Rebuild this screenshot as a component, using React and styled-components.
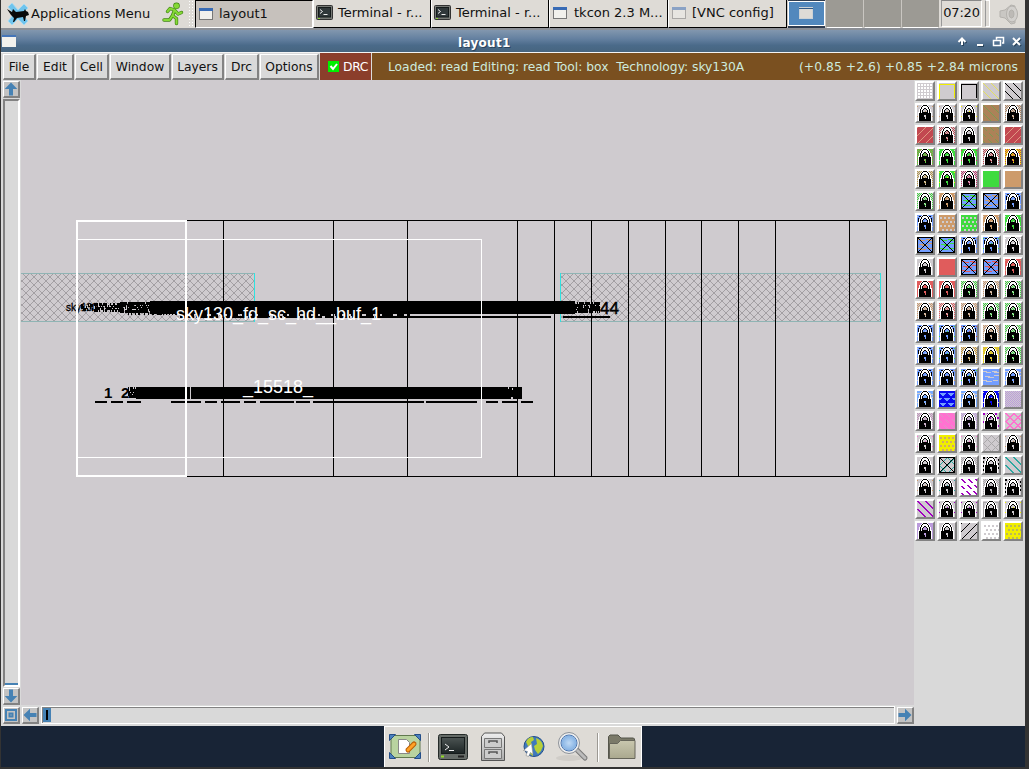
import React from 'react';
import styled, { createGlobalStyle } from 'styled-components';

const Global = createGlobalStyle`
  * { box-sizing: border-box; }
  body { margin: 0; background: #333; overflow: hidden; }
  svg { display: block; }
`;

const Desktop = styled.div`
  width: 1029px;
  height: 769px;
  padding: 0 4px 2px 1px;
  background: #333;
  font: 13px/16px 'DejaVu Sans', sans-serif;
  color: #111;
  display: flex;
  flex-direction: column;
  white-space: pre;
`;

/* Top panel */
const Panel = styled.header`
  display: flex;
  height: 28px;
  flex: none;
  background: #dedbd6;
`;
const AppMenu = styled.div`
  display: flex;
  align-items: center;
  width: 161px;
  padding-left: 5px;
  gap: 1px;
`;
const Runner = styled.div`
  width: 26px;
  padding-top: 2px;
`;
const Handle = styled.div`
  width: 7px;
  background: radial-gradient(circle, #fff 0.8px, transparent 1px) 0 0 / 3px 3px;
`;
const Task = styled.div`
  display: flex;
  align-items: center;
  height: 28px;
  width: ${p => p.$w}px;
  padding: 0 0 ${p => (p.$active ? 1 : 1)}px 2px;
  gap: ${p => p.$gap || 5}px;
  background: ${p => (p.$active ? '#c6c1bc' : '#dedbd6')};
  border: solid;
  border-width: ${p => (p.$active ? '1px' : '0 1px 1px 1px')};
  border-color: ${p => (p.$active ? '#000 #fff #fff #000' : '#fff #000 #000 #fff')};
  overflow: hidden;
`;
const Pager = styled.div`
  display: grid;
  grid-template-columns: repeat(4, 37px);
  column-gap: 1px;
  height: 28px;
  padding-left: 1px;
  background: #c9c6c1;
`;
const Workspace = styled.div`
  background: ${p => (p.$on ? '#5288bd' : '#9c9a94')};
  border: 1px solid ${p => (p.$on ? '#fff' : '#9c9a94')};
  border-bottom-color: #fff;
  margin: ${p => (p.$on ? '1px 0 2px' : '0')};
  box-shadow: ${p => (p.$on ? '0 -1px #2f3c50, 0 2px #2f3c50' : 'none')};
  padding: 5px 0 0 10px;
`;
const Clock = styled.div`
  width: 41px;
  height: 27px;
  margin-left: 2px;
  border: 1px solid #fff;
  border-top-color: #888;
  border-left-color: #999;
  text-align: center;
  line-height: 24px;
  letter-spacing: -0.2px;
`;
const TrayGrip = styled.div`
  width: 5px;
  height: 27px;
  margin-left: 3px;
  border: 1px solid #fff;
  border-left-color: #999;
`;
const Tray = styled.div`
  flex: 1;
  padding: 2px 0 0 7px;
  opacity: 0.8;
`;

/* Window */
const Window = styled.main`
  height: 698px;
  flex: none;
  border-top: 2px solid #8b8f96;
  display: flex;
  flex-direction: column;
  background: #d9d9d9;
`;
const TitleBar = styled.div`
  display: flex;
  height: 23px;
  flex: none;
  border-bottom: 1px solid #f4f4f4;
  background: linear-gradient(#8297ae 0, #6480a0 40%, #4a6a89 70%, #47657f 100%);
  color: #fff;
  font-weight: bold;
  font-size: 12px;
  line-height: 26px;
  text-shadow: 1px 1px #2b435c;
`;
const TitleText = styled.div`
  width: 944px;
  padding-left: 446px;
  margin-left: -4px;
  letter-spacing: 0.3px;
`;
const MenuRow = styled.nav`
  display: flex;
  height: 27px;
  flex: none;
  padding: 1px 0 0 2px;
  gap: 1px;
  background: #d9d9d9;
  font-size: 12.3px;
`;
const MenuButton = styled.div`
  width: ${p => p.$w}px;
  height: 26px;
  border: solid;
  border-width: 1px 2px 2px 1px;
  border-color: #fff #828282 #828282 #fff;
  text-align: center;
  line-height: 24px;
`;
const DrcToggle = styled.div`
  display: flex;
  align-items: center;
  gap: 4px;
  width: 52px;
  margin-top: -1px;
  padding: 0 0 0 8px;
  background: #8b3e2b;
  border-right: 1px solid #ddd;
  color: #fff;
  letter-spacing: -0.3px;
`;
const Status = styled.div`
  display: flex;
  flex: 1;
  justify-content: space-between;
  margin: -1px 0 0 -1px;
  padding: 0 7px 0 16px;
  background: #7a5020;
  color: #cdeade;
  line-height: 28px;
`;
const StatusText = styled.span`
  letter-spacing: ${p => p.$ls}px;
`;
const Body = styled.div`
  display: flex;
  flex: 1;
  min-height: 0;
`;
const Work = styled.div`
  width: 913px;
  display: grid;
  grid-template: 625px 20px / 20px 893px;
`;
const VScroll = styled.div`
  display: flex;
  flex-direction: column;
  align-items: center;
  gap: 1px;
  padding: 1px 1px 0 2px;
`;
const ArrowButton = styled.div`
  width: 17px;
  height: 17px;
  flex: none;
  background: #c3c3c3;
  border: solid;
  border-width: 1px 2px 2px 1px;
  border-color: #fff #828282 #828282 #fff;
`;
const VTrough = styled.div`
  width: 17px;
  height: 588px;
  flex: none;
  border: 2px solid #fff;
  border-top-color: #828282;
  border-left-color: #828282;
  display: flex;
  align-items: flex-end;
  &::after { content: ''; width: 100%; height: 2px; background: #4682b4; }
`;
const HScroll = styled.div`
  grid-column: 1 / 3;
  display: flex;
  align-items: center;
  gap: 2px;
  padding-left: 2px;
`;
const HTrough = styled.div`
  width: 854px;
  height: 18px;
  border: 1px solid #fff;
  box-shadow: inset 1px 1px #828282;
  padding: 1px;
`;
const Thumb = styled.div`
  width: 8px;
  height: 14px;
  background: #4682b4;
  padding: 2px 3px;
  &::after { content: ''; display: block; width: 2px; height: 10px; background: #000; }
`;
const Palette = styled.aside`
  display: grid;
  grid-template-columns: repeat(5, 20px);
  grid-auto-rows: 20px;
  align-content: start;
  gap: 2px;
  padding: 1px;
`;
const Swatch = styled.div`
  border: 2px solid;
  border-color: #fff #828282 #828282 #fff;
  background: #cfcbcf;
`;

/* Dock */
const Ground = styled.footer`
  flex: 1;
  display: flex;
  justify-content: center;
  background: #182436;
`;
const Dock = styled.div`
  display: flex;
  width: 258px;
  height: 41px;
  border: 1px solid #fff;
  border-bottom: 0;
  background: #dedbd6;
`;

const LOCK = [
  '.....WKKKKW.....',
  '....WKWWWWKW....',
  '...WKWWWWWWKW...',
  '...WKWWKKWWKW...',
  '..WKWWK..KWWKW..',
  '..WKWK....KWKW..',
  '..WKWK....KWKW..',
  '.WWKWKKKKKKWKWW.',
  '.WKKKKKKKKKKKKW.',
  '.WKKKKKKKKKKKKW.',
  '.WKKKKK..KKKKKW.',
  '.WKKKKK..KKKKKW.',
  '.WKKKKKK.KKKKKW.',
  '.WKKKKKK.KKKKKW.',
  '.WKKKKKKKKKKKKW.',
  '.WKKKKKKKKKKKKW.',
];
const lockPath = ch =>
  LOCK.map((row, y) => [...row].map((c, x) => (c === ch ? `M${x} ${y}h1v1h-1z` : '')).join('')).join('');
const LOCK_W = lockPath('W');
const LOCK_K = lockPath('K');

const grid = (step, w, ox = 0, oy = 0, stagger = 0, rowStep = step) => {
  let d = '';
  for (let y = oy, r = 0; y < 16; y += rowStep, r++)
    for (let x = ox + (r % 2 ? stagger : 0); x < 16; x += step) d += `M${x} ${y}h${w}v${w}h-${w}z`;
  return d;
};
const diagonal = (step, dir, gap = 0) => {
  let d = '';
  for (let y = 0; y < 16; y++)
    for (let x = 0; x < 16; x++) {
      const v = dir > 0 ? x - y : x + y;
      if (((v % step) + step) % step === 0 && !(gap && y % gap >= gap - 2)) d += `M${x} ${y}h1v1h-1z`;
    }
  return d;
};
const P = {
  none: '',
  check: grid(2, 1) + grid(2, 1, 1, 1),
  dots: grid(3, 2, 1, 1),
  holes: grid(4, 2, 1, 2, 2, 4),
  diag: diagonal(8, 1),
  slash: diagonal(8, -1),
  dash: diagonal(7, 1, 6),
  sparse: grid(5, 1, 0, 1, 3),
  cross: diagonal(8, 1) + diagonal(8, -1),
  blocks: grid(4, 2, 0, 0, 2),
  frame: 'M0 1h16v14h-1v-13h-14v14h-1z',
  dotframe: 'M0 0h2v2h-2zM4 0h2v1h-2zM8 0h2v1h-2zM12 0h2v1h-2zM0 4h1v2h-1zM0 8h1v2h-1zM0 12h1v2h-1zM15 2h1v2h-1zM15 6h1v2h-1zM15 10h1v2h-1zM2 15h2v1h-2zM6 15h2v1h-2zM10 15h2v1h-2z',
  waves: 'M0 2h4v1h4v1h-5v-1h-3zM9 2h5v1h2v1h-5v-1h-2zM2 7h5v1h4v1h-6v-1h-3zM11 6h5v1h-5zM0 11h4v1h5v1h-6v-1h-3zM10 11h5v1h-5z',
  zig: 'M1 2h6v1h-1v1h-1v1h-2v-1h-1v-1h-1zM9 2h6v1h-1v1h-1v1h-2v-1h-1v-1h-1zM5 7h6v1h-1v1h-1v1h-2v-1h-1v-1h-1zM0 7h3v1h-1v1h-2zM13 7h3v2h-2v-1h-1zM1 12h6v1h-1v1h-1v1h-2v-1h-1v-1h-1zM9 12h6v1h-1v1h-1v1h-2v-1h-1v-1h-1z',
};

const G = '#3edb3e', T = '#cd9b6b', R = '#c24850', C = '#e05c5c', B = '#739eff', Y = '#f0ee00', K = '#000', N = '#cfcbcf',
  W = '#fff', BR = '#ac8258', V = '#a000c0', PK = '#ff72d0', LI = '#bb9bdc', BL = '#0808f0', TE = '#2da8a0', GY = '#aaa8aa';

/* [background, pattern, pattern colour, locked, extra] */
const ROWS = [
  [[N, 'dots', W], [N, 'frame', Y], [N, 'frame', K], [N, 'diag', '#e4e060'], [N, 'diag', K]],
  [[N, 'sparse', T, 1], [N, 'sparse', T, 1], [N, 'sparse', Y, 1], [BR, 'diag', '#7c9a52'], [N, 'check', BR, 1]],
  [[R, 'slash', '#e09a83'], [N, 'check', R, 1], [N, 'none', K, 1], [BR, 'dash', '#7c9a52'], [R, 'slash', '#e09a83']],
  [[G, 'check', BR, 1], [G, 'sparse', N, 1], [G, 'sparse', R, 1], [N, 'check', R, 1], [Y, 'check', R, 1]],
  [[N, 'check', '#b79847', 1], [G, 'sparse', Y, 1], [N, 'check', '#bd356d', 1], [G, 'none', K], [T, 'none', K]],
  [[N, 'check', G, 1], [T, 'sparse', N, 1], [B, 'waves', G, 0, 'x'], [B, 'waves', T, 0, 'x'], [B, 'sparse', N, 1, 'f']],
  [[B, 'sparse', N, 1, 'f'], [T, 'holes', N], [G, 'holes', N], [T, 'sparse', N, 1], [G, 'sparse', N, 1]],
  [[B, 'waves', T, 0, 'x'], [B, 'waves', G, 0, 'x'], [B, 'sparse', T, 1, 'f'], [B, 'sparse', G, 1, 'f'], [N, 'sparse', W, 1]],
  [[N, 'none', K, 1], [C, 'none', K], [B, 'waves', C, 0, 'x'], [B, 'waves', C, 0, 'x'], [C, 'sparse', T, 1]],
  [[C, 'none', K, 1], [C, 'none', K, 1], [N, 'check', G, 1], [N, 'check', T, 1], [N, 'check', G, 1]],
  [[N, 'check', T, 1], [N, 'check', C, 1], [N, 'check', T, 1], [N, 'check', G, 1], [N, 'check', G, 1]],
  [[B, 'sparse', N, 1, 'f'], [B, 'sparse', G, 1, 'f'], [B, 'sparse', R, 1, 'f'], [N, 'check', T, 1], [N, 'check', G, 1]],
  [[B, 'sparse', N, 1, 'f'], [B, 'sparse', G, 1, 'f'], [N, 'check', '#c8962c', 1], [Y, 'check', T, 1], [N, 'check', G, 1]],
  [[B, 'sparse', N, 1, 'f'], [B, 'sparse', T, 1, 'f'], [B, 'sparse', G, 1, 'f'], [B, 'waves', N], [B, 'waves', N, 1]],
  [['#79acff', 'waves', N, 1], [BL, 'zig', B], ['#79acff', 'waves', N, 1], [BL, 'sparse', N, 1], [N, 'check', LI]],
  [[N, 'check', '#c093bc', 1], [PK, 'dash', '#d99bc4'], [N, 'check', LI, 1], [N, 'blocks', V, 1], [N, 'cross', PK, 0, 'o']],
  [[N, 'sparse', PK, 1], [Y, 'holes', '#cfa970'], [N, 'sparse', PK, 1], [N, 'cross', GY], [N, 'sparse', T, 1]],
  [[N, 'none', K, 1], [N, 'cross', TE, 0, 'x'], [N, 'check', GY, 1], [N, 'dotframe', K, 1], [N, 'diag', TE, 0, '2']],
  [[N, 'sparse', T, 1], [N, 'sparse', TE, 1], [W, 'dash', V, 0, '2'], [N, 'check', GY, 1], [N, 'dotframe', K, 1]],
  [[N, 'diag', V, 0, '2'], [N, 'sparse', V, 1], [N, 'sparse', V, 1], [N, 'frame', GY, 1], [N, 'sparse', Y, 1]],
  [[LI, 'none', K, 1], [N, 'none', K, 1], [N, 'slash', K], [W, 'holes', N], [Y, 'holes', '#bdb957']],
];

function Layer({ cell: [bg, kind, color, locked, extra] }) {
  return (
    <Swatch>
      <svg width="16" height="16" viewBox="0 0 16 16" shapeRendering="crispEdges">
        <rect width="16" height="16" fill={bg} />
        <path d={P[kind]} fill={color} />
        {extra === '2' && <path d={P[kind]} fill={color} transform="translate(1 0)" />}
        {extra === 'o' && <path d={P[kind]} fill={color} transform="translate(1 0)" />}
        {extra === 'x' && <path d="M.5 .5h15v15h-15zM0 0L16 16M16 0L0 16" fill="none" stroke="#000" />}
        {extra === 'f' && <path d="M1.5 16V2.500M14.500 16V2.500M2 1.500H14" fill="none" stroke="#000" />}
        {!!locked && <path d={LOCK_W} fill="#fff" />}
        {!!locked && <path d={LOCK_K} fill="#000" />}
      </svg>
    </Swatch>
  );
}

const Arrow = ({ turn = 0 }) => (
  <svg width="14" height="14" viewBox="0 0 14 14">
    <path d="M7 .5L13.300 7H9v6.500H5V7H.7z" fill="#4682b4" transform={`rotate(${turn} 7 7)`} />
  </svg>
);
const WinIcon = ({ dim }) => (
  <svg width="16" height="16" viewBox="0 0 16 16" opacity={dim ? 0.5 : 1}>
    <rect x="1.500" y="2.500" width="13" height="11" fill="#f1f0ec" stroke="#777" />
    <path d="M1 2h14v3H1z" fill="#386bb5" />
  </svg>
);
const TermIcon = () => (
  <svg width="17" height="16" viewBox="0 0 17 16">
    <rect x=".5" y=".5" width="16" height="14" rx="1" fill="#777a76" stroke="#333" />
    <rect x="2.500" y="2.500" width="12" height="9.500" fill="#30383a" stroke="#151b1b" />
    <path d="M4 4.500l2.500 2L4 8.500M7.500 9.500h4" fill="none" stroke="#eee" />
    <path d="M2 13.500h2" stroke="#91db36" />
  </svg>
);
const MouseLogo = () => (
  <svg width="24" height="24" viewBox="0 0 24 24">
    <path d="M2 5L6 1l6 7 6-6 4 4-6 6 6 7-4 4-6-6-6 6-4-4 6-7z" fill="#6fc4ed" stroke="#a9daf1" />
    <path d="M1 7l5 3 1-3 3 3 8-1 1-2 1 2 2 1 1 3-3 1-1 5h-1l-1-4-6 1-3 4H7l1-4-3-3z" fill="#080a0a" />
  </svg>
);
const RunIcon = () => (
  <svg width="24" height="24" viewBox="0 0 24 24" strokeLinecap="round" strokeLinejoin="round" fill="none">
    {[['#418514', 3.4], ['#85d936', 2]].map(([c, w]) => (
      <g key={c} stroke={c} strokeWidth={w}>
        <path d="M12.500 8.500l-2 5 4 3v5M10.500 13.500l-3 4.500H2M12.500 8L8 6.500 5.500 9.500M13 8.500l3 3.500 3.500-1.500" />
        <circle cx="14.500" cy="3.800" r="1.600" fill={c} />
      </g>
    ))}
  </svg>
);
const Speaker = () => (
  <svg width="24" height="24" viewBox="0 0 24 24" fill="#c5c3bf" stroke="#aaa8a4">
    <path d="M3 9l5-1 6-5 4 1v17l-4 1-6-6-5-1z" />
    <ellipse cx="15" cy="12" rx="5.500" ry="8" fill="#d0cecb" />
    <ellipse cx="14.500" cy="12" rx="2.500" ry="4" fill="#b5b3af" />
  </svg>
);
const WindowControls = () => (
  <svg width="68" height="22" viewBox="0 0 68 22" fill="none" stroke="#fff" strokeWidth="2">
    <g transform="translate(1 1)" stroke="#28435b">
      <path d="M6 15V9M2.500 12L6 8.500 9.500 12M21 15h6" /><path d="M57 8l7 7M64 8l-7 7" />
    </g>
    <path d="M6 15V9M2.500 12L6 8.500 9.500 12M21 15h6M57 8l7 7M64 8l-7 7" />
    <path d="M40.500 9.500V7.500h7v5.500H46M37.500 10.500h7v5h-7z" strokeWidth="1.500" />
  </svg>
);

const LINES = [223, 333, 407, 517, 554, 591, 628, 665, 701, 738, 775, 849];
const NAME = 'sky130_fd_sc_hd__buf_1';

/* Uneven marks, where many stacked labels merge into one mass */
const smear = (from, to, top, bottom, density, seed) => {
  let d = '', s = seed;
  const rnd = () => (s = (s * 16807) % 2147483647) / 2147483647;
  for (let i = 0; i < 20; i++) rnd();
  for (let x = from; x < to; x++)
    for (let y = top; y < bottom; y += 2) if (rnd() < density) d += `M${x} ${y}h1v3h-1z`;
  return d;
};
const SMEARS =
  smear(80, 96, 304, 310, 0.45, 11) + smear(94, 122, 303, 311, 0.65, 71) + smear(120, 150, 302, 312, 0.8, 29) +
  smear(124, 180, 312, 314, 0.35, 37) + smear(575, 600, 302, 311, 0.85, 91) + smear(128, 137, 387, 396, 0.8, 53);

function LayoutView() {
  return (
    <svg width="893" height="625" viewBox="21 80 893 625" fontFamily="Liberation Sans, sans-serif">
      <defs>
        <pattern id="hatch" width="8" height="8" x="22" y="273" patternUnits="userSpaceOnUse">
          <path d="M0 0l8 8M8 0L0 8" stroke="#a39fa3" />
        </pattern>
      </defs>
      <rect x="21" y="80" width="893" height="625" fill="#cfcbcf" />
      <g shapeRendering="crispEdges">
        <rect x="21" y="273" width="234" height="49" fill="url(#hatch)" />
        <rect x="560" y="273" width="321" height="49" fill="url(#hatch)" />
        <path d="M254.500 273V322M560.500 273V322M880.500 273V322" stroke="#2fe3e0" />
        <path d="M21 273.500H254M21 321.500H254M561 273.500H880M561 321.500H880" stroke="#8fb4b4" />
        <path d={`M187 220.500H886.500V476.500H187${LINES.map(x => `M${x}.500 220V476`).join('')}`} stroke="#000" fill="none" />
        <path d="M150 301H575V314H150z" />
        <path d={SMEARS} />
        <path d="M180 317H380" stroke="#000" strokeWidth="2" strokeDasharray="14 2 22 3 9 2" />
        <path d="M180 315H410" stroke="#000" strokeWidth="2" strokeDasharray="7 3 4 2 11 4" />
        <path d="M375 316h176v2H375zM563 316h47v2h-47z" />
        <path d="M136 387H522V399H136z" />
        <path d="M190 387h1v12h-1zM508 387h1v2h-1zM512 388h1v2h-1zM511 397h2v2h-2z" fill="#cfcbcf" />
        <path d="M95 401h12v2H95zM111 401h12v2h-12zM127 401h14v2h-14zM171 401h30v2h-30zM205 401h12v2h-12zM221 401h19v2h-19zM244 401h12v2h-12zM260 401h34v2h-34zM296 401h14v2h-14zM313 401h111v2H313zM426 401h51v2h-51zM486 401h12v2h-12zM502 401h15v2h-15zM521 401h12v2h-12z" />
      </g>
      <text x="66" y="311" fontSize="10" stroke="#000" strokeWidth=".3">sky130</text>
      <text x="600" y="314" fontSize="17" stroke="#000" strokeWidth=".5">44</text>
      <text x="104" y="398" fontSize="15" fontWeight="bold">1</text>
      <text x="121" y="398" fontSize="15" fontWeight="bold">2</text>
      <g fill="none" stroke="#fff" shapeRendering="crispEdges">
        <path d="M77 221H186V476H77z" strokeWidth="2" />
        <path d="M77 239.500H481.500V457.500H77" />
      </g>
      <g fill="#fff" fontSize="18">
        <text x="176" y="320" textLength="205">{NAME}</text>
        <text x="243" y="393" textLength="70">_15518_</text>
      </g>
    </svg>
  );
}

const DockIcons = () => (
  <svg width="256" height="40" viewBox="385 727 256 40">
    <defs>
      <linearGradient id="metal" x2="0" y2="1"><stop stopColor="#eee" /><stop offset="1" stopColor="#aaa" /></linearGradient>
      <linearGradient id="screen" x2="0" y2="1"><stop stopColor="#4c5453" /><stop offset="1" stopColor="#1c2424" /></linearGradient>
      <radialGradient id="glass"><stop stopColor="#bed9f5" /><stop offset="1" stopColor="#78a9df" /></radialGradient>
      <linearGradient id="folder" x2="0" y2="1"><stop stopColor="#c9c7af" /><stop offset="1" stopColor="#aaa88e" /></linearGradient>
    </defs>
    <rect x="391" y="735.500" width="29" height="22" rx="3" fill="#b9d3a0" stroke="#61794f" />
    <path d="M389.500 734.500h6l-6 6zM420.500 734.500h-6l6 6zM389.500 758.500v-6l6 6zM420.500 758.500v-6l-6 6z" fill="#4a80be" stroke="#244e88" />
    <path d="M398.500 739.500h8l3 3v11h-11z" fill="#fff" stroke="#888" />
    <path d="M408 750l6-6" stroke="#b85c00" strokeWidth="5" strokeLinecap="round" />
    <path d="M408 750l6-6" stroke="#ffa226" strokeWidth="3" strokeLinecap="round" />
    <path d="M428.500 733v29M597.500 733v29" stroke="#9c9993" />
    <path d="M429.500 733v29M598.500 733v29" stroke="#fff" />
    <rect x="438.500" y="734.500" width="29" height="25" rx="2" fill="#656b67" stroke="#242a28" />
    <rect x="441.500" y="737.500" width="23" height="16" fill="url(#screen)" stroke="#151b1b" />
    <path d="M445 744l4 3-4 3M449 750.500h5" fill="none" stroke="#eee" />
    <path d="M441 756.500h3" stroke="#92db28" strokeWidth="2" />
    <path d="M458 756.500h6" stroke="#222" strokeWidth="2" />
    <path d="M481.500 760.500v-24l3-3.500h17l3 3.500v24z" fill="url(#metal)" stroke="#555" />
    <path d="M484.500 738.500h17v9h-17zM484.500 749.500h17v9h-17z" fill="#ccc" stroke="#777" />
    <path d="M489 743v-2h8v2M489 754v-2h8v2" fill="none" stroke="#555" strokeWidth="1.500" />
    <circle cx="534" cy="746.500" r="10" fill="#3f79bd" stroke="#244f88" />
    <path d="M526 742q2-5 7-5l1 3-3 2 1 3-3 3zM536 738q6 2 7 8l-2 5-3 3-3-4-1-4 3-2zM530 750l3 2v4l-3-2z" fill="#b8cf38" />
    <path d="M531.500 743.500l-8 7 4 1-1.500 4 2.500 1 2-4 2.500 2z" fill="#fff" stroke="#888" strokeWidth=".6" />
    <ellipse cx="569" cy="758" rx="13" ry="3" fill="#d0cdc8" />
    <path d="M577 750l8 8" stroke="#777" strokeWidth="5" strokeLinecap="round" />
    <path d="M577 750l8 8" stroke="#bbb" strokeWidth="3" strokeLinecap="round" />
    <circle cx="569" cy="743" r="9" fill="url(#glass)" stroke="#eee" strokeWidth="3" />
    <circle cx="569" cy="743" r="10.500" fill="none" stroke="#8d9299" />
    <circle cx="569" cy="743" r="8" fill="none" stroke="#4b78b4" />
    <path d="M608.500 758.500v-22l1.500-1.500h8l3 3h12.500l1 1v19.500z" fill="#7b7a69" stroke="#55554b" />
    <path d="M609.500 758.500v-15h8l3-3h14.500v18z" fill="url(#folder)" stroke="#66655a" />
  </svg>
);

const MENUS = [['File', 33], ['Edit', 37], ['Cell', 34], ['Window', 61], ['Layers', 52], ['Drc', 34], ['Options', 59]];

export default function App() {
  return (
    <Desktop>
      <Global />
      <Panel>
        <AppMenu><MouseLogo />Applications Menu</AppMenu>
        <Runner><RunIcon /></Runner>
        <Handle />
        <Task $w={118} $active><WinIcon />layout1</Task>
        <Task $w={118}><TermIcon />Terminal - r...</Task>
        <Task $w={118}><TermIcon />Terminal - r...</Task>
        <Task $w={119} $gap={6}><WinIcon />tkcon 2.3 M...</Task>
        <Task $w={119} $gap={5}><WinIcon dim />[VNC config]</Task>
        <Pager>
          <Workspace $on>
            <svg width="14" height="12" viewBox="0 0 14 12"><rect x=".5" y=".5" width="13" height="11" fill="#dedbd6" stroke="#ccd2d6" /><path d="M0 1.500h14" stroke="#315986" /></svg>
          </Workspace>
          <Workspace /><Workspace /><Workspace />
        </Pager>
        <Clock>07:20</Clock>
        <TrayGrip />
        <Tray><Speaker /></Tray>
      </Panel>
      <Window>
        <TitleBar>
          <svg width="15" height="22" viewBox="0 0 15 22"><path d="M1 5h14v12H1z" fill="#f2f1ed" /><path d="M1 5h14v2H1z" fill="#4575b8" /></svg>
          <TitleText>layout1</TitleText>
          <WindowControls />
        </TitleBar>
        <MenuRow>
          {MENUS.map(([label, w]) => <MenuButton key={label} $w={w}>{label}</MenuButton>)}
          <DrcToggle>
            <svg width="11" height="11" viewBox="0 0 11 11"><path d="M0 0h11v11H0z" fill="#00f000" /><path d="M2.500 5l2.500 3 4-5" fill="none" stroke="#fff" strokeWidth="2" /></svg>
            DRC
          </DrcToggle>
          <Status>
            <StatusText $ls={-0.02}>Loaded: read Editing: read Tool: box  Technology: sky130A</StatusText>
            <StatusText $ls={0.07}>(+0.85 +2.6) +0.85 +2.84 microns</StatusText>
          </Status>
        </MenuRow>
        <Body>
          <Work>
            <VScroll>
              <ArrowButton><Arrow /></ArrowButton>
              <VTrough />
              <ArrowButton><Arrow turn={180} /></ArrowButton>
            </VScroll>
            <LayoutView />
            <HScroll>
              <ArrowButton>
                <svg width="14" height="14" viewBox="0 0 14 14" fill="none" stroke="#4682b4" strokeWidth="2"><path d="M2 2h10v10H2z" /><path d="M5.500 5.500h3v3h-3z" /></svg>
              </ArrowButton>
              <ArrowButton><Arrow turn={-90} /></ArrowButton>
              <HTrough><Thumb /></HTrough>
              <ArrowButton><Arrow turn={90} /></ArrowButton>
            </HScroll>
          </Work>
          <Palette>{ROWS.flat().map((cell, i) => <Layer key={i} cell={cell} />)}</Palette>
        </Body>
      </Window>
      <Ground><Dock><DockIcons /></Dock></Ground>
    </Desktop>
  );
}
